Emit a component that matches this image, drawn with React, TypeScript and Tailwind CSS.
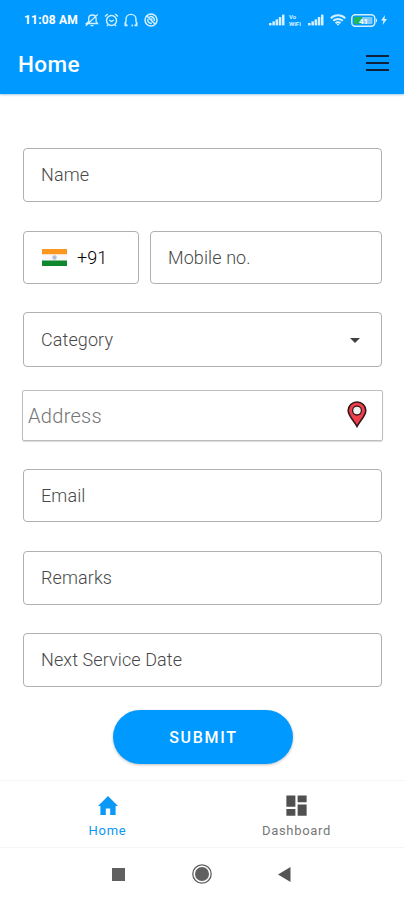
import React from "react";
import { MdArrowDropDown, MdDashboard } from "react-icons/md";

type FieldProps = {
  label: string;
  className?: string;
  children?: React.ReactNode;
};

const SignalIcon = () => (
  <svg width="16" height="12" viewBox="0 0 16 12" fill="#d5f0ff">
    <rect x="0" y="9" width="2.6" height="2.4" />
    <rect x="3.4" y="7.4" width="2.5" height="4" />
    <rect x="6.6" y="5.4" width="2.5" height="6" />
    <rect x="9.8" y="3" width="2.5" height="8.4" />
    <rect x="13" y="0.6" width="2.5" height="10.8" />
  </svg>
);

const HomeIcon = () => (
  <svg width="20" height="19" viewBox="0 0 20 19" fill="currentColor">
    <path d="M10 0L0 10h2.400v9h5.400v-6.500h4.400V19h5.400v-9H20z" />
  </svg>
);

const StatusBar = () => (
  <div className="flex h-10 items-center text-[#d5f0ff]">
    <span className="ml-6 w-[56px] text-[12px] font-bold tracking-[0.2px] whitespace-nowrap text-white">
      11:08 AM
    </span>
    <svg className="ml-[5px]" width="14" height="14" viewBox="0 0 14 14" fill="none" stroke="currentColor" strokeWidth="1.3">
      <path d="M1.500 10.500h11l-1.400-2V5.600C11 3.300 9.300 2 7.300 2S3.700 3.300 3.700 5.600v2.900zM5.500 12.600h3M0.800 12.800L12.800 1.400" />
    </svg>
    <svg className="ml-[5px]" width="15" height="14" viewBox="0 0 15 14" fill="none" stroke="currentColor" strokeWidth="1.400">
      <circle cx="7.500" cy="7.500" r="5" />
      <path d="M1 3.500L3.800 1M14 3.500L11.200 1M5.300 7l2.200 1.500L9.800 7M4 11.800L3 13M11 11.800l1 1.200" />
    </svg>
    <svg className="ml-[5px]" width="14" height="14" viewBox="0 0 14 14" fill="none" stroke="currentColor" strokeWidth="1.400">
      <path d="M2 9V6a5 4.600 0 0 1 10 0v3" />
      <path d="M1.400 9v3.400h2.200M12.600 9v3.400h-2.200M7.500 12.500h1.400" strokeWidth="1.800" />
    </svg>
    <svg className="ml-[6px]" width="14" height="14" viewBox="0 0 14 14" fill="none" stroke="currentColor" strokeWidth="1.500">
      <circle cx="7" cy="7" r="6" />
      <path d="M3 3l8 8M5.500 3.800c3-.8 5.300 1.300 4.800 4.200M3.800 6c-.5 2.500 1.300 4.500 4 4.200M6.500 6.200l2-.2" />
    </svg>

    <div className="mr-[17px] ml-auto flex items-center">
      <SignalIcon />
      <div className="ml-1 flex w-[15px] flex-col text-[6px] leading-[7px] font-bold">
        <span>Vo</span>
        <span>WiFi</span>
      </div>
      <span className="ml-[4px] flex">
        <SignalIcon />
      </span>
      <svg className="ml-[6px]" width="16" height="12" viewBox="0 0 16 12" fill="none" stroke="currentColor" strokeWidth="2">
        <path d="M0.800 4.200c4-3.800 10.400-3.800 14.400 0M3.200 6.800c2.700-2.500 6.900-2.500 9.600 0M5.600 9.200c1.300-1.200 3.500-1.200 4.800 0" />
        <path d="M6.500 10h3L8 11.800z" fill="currentColor" stroke="none" />
      </svg>
      <svg className="ml-[5px]" width="27" height="13" viewBox="0 0 27 13">
        <rect x="0.800" y="0.800" width="23" height="11.400" rx="3.500" fill="none" stroke="currentColor" strokeWidth="1.500" />
        <rect x="3" y="3" width="8" height="7" rx="1" fill="#20b85a" />
        <rect x="11" y="3" width="10.500" height="7" rx="1" fill="#7cc9fa" />
        <path d="M25 4.500c1.500.5 1.500 3.500 0 4z" fill="currentColor" />
        <text x="12.500" y="9.500" textAnchor="middle" fontSize="8" fontWeight="700" fill="#fff">41</text>
      </svg>
      <svg className="ml-[3px]" width="6" height="10" viewBox="0 0 6 10" fill="currentColor">
        <path d="M4 0L0 5.500h2.400L1.500 10 6 4H3.500z" />
      </svg>
    </div>
  </div>
);

const Field = ({ label, className = "", children }: FieldProps) => (
  <div
    className={`flex items-center rounded-[4px] border border-[#b0b0b0] pl-[17px] text-[18px] font-light tracking-[0.1px] text-[#484848] ${className}`}
  >
    <span className="pb-px">{label}</span>
    {children}
  </div>
);

const IndiaFlag = () => (
  <svg width="25" height="17" viewBox="0 0 25 17">
    <rect width="25" height="5.500" fill="#fb9620" />
    <rect y="5.500" width="25" height="6" fill="#f8f8fa" />
    <rect y="11.500" width="25" height="5.500" fill="#10882f" />
    <circle cx="12.500" cy="8.500" r="2.200" fill="#b5bddb" />
  </svg>
);

const LocationPin = () => (
  <svg className="-mt-[2px]" width="20" height="27" viewBox="0 0 20 27">
    <path
      d="M10 1C5 1 1.200 4.700 1.200 9.500 1.200 15 7 19.500 10 25.500 13 19.500 18.800 15 18.800 9.500 18.800 4.700 15 1 10 1z"
      fill="#ee3f4a"
      stroke="#32181c"
      strokeWidth="1.600"
    />
    <circle cx="10" cy="9.600" r="4.400" fill="#f2f2f2" stroke="#32181c" strokeWidth="1.300" />
  </svg>
);

export default function App() {
  return (
    <div className="flex h-[900px] w-[404px] flex-col overflow-hidden bg-white font-[Roboto,sans-serif]">
      <header className="h-[94px] shrink-0 bg-[#0099ff] shadow-[0_1px_2px_rgba(0,100,180,0.35)]">
        <StatusBar />
        <div className="flex h-[48px] items-center justify-between pr-[15px] pl-[18px]">
          <h1 className="pt-[2px] text-[22.5px] font-medium tracking-[0.4px] text-white">Home</h1>
          <button aria-label="Menu" className="mb-[2px] flex w-[23px] flex-col gap-[5px]">
            <span className="h-[2px] bg-[#102038]" />
            <span className="h-[2px] bg-[#102038]" />
            <span className="h-[2px] bg-[#102038]" />
          </button>
        </div>
      </header>

      <main className="flex h-[686px] shrink-0 flex-col pt-[54px] pr-[22px] pl-[23px]">
        <Field label="Name" className="h-[54px]" />

        <div className="mt-[29px] flex gap-[11px]">
          <div className="flex h-[53px] w-[116px] items-center rounded-[4px] border border-[#b0b0b0] pl-[18px] text-[18px]">
            <IndiaFlag />
            <span className="ml-[10px] pb-px font-light text-black">+91</span>
          </div>
          <Field label="Mobile no." className="h-[53px] flex-1" />
        </div>

        <Field label="Category" className="mt-[28px] h-[55px]">
          <MdArrowDropDown size={24} className="mr-[14px] ml-auto text-[#404040]" />
        </Field>

        <div className="-mx-px mt-[23px] flex h-[51px] items-center justify-between rounded-[2px] border border-[#bdbdbd] pr-[15px] pl-[5px] text-[20px] font-light tracking-[0.3px] text-[#757575] shadow-[0_1px_1px_rgba(0,0,0,0.15)]">
          <span>Address</span>
          <LocationPin />
        </div>

        <Field label="Email" className="mt-[28px] h-[53px]" />
        <Field label="Remarks" className="mt-[29px] h-[54px]" />
        <Field label="Next Service Date" className="mt-[28px] h-[54px]" />

        <button className="mt-[23px] ml-[90px] h-[54px] w-[180px] rounded-full bg-[#0099ff] pt-px pl-px text-[16px] font-medium tracking-[1.7px] text-white shadow-[0_1px_3px_rgba(0,0,0,0.25)]">
          SUBMIT
        </button>
      </main>

      <nav className="flex h-[67px] shrink-0 border-t border-[#f6f6f6] pl-[13px] text-[13px] tracking-[0.7px]">
        <div className="flex w-[189px] flex-col items-center pt-[15px] text-[#0c98f5]">
          <HomeIcon />
          <span className="mt-[6px] leading-[20px]">Home</span>
        </div>
        <div className="flex w-[189px] flex-col items-center pt-[13px] text-[#777777]">
          <MdDashboard size={27} className="-mt-[2px] text-[#505050]" />
          <span className="mt-[2px] leading-[20px]">Dashboard</span>
        </div>
      </nav>

      <footer className="flex h-[53px] items-center border-t border-[#f4f4f4] text-[#555555]">
        <span className="ml-[112px] size-[13px] bg-[#606060]" />
        <svg className="ml-[67px]" width="20" height="20" viewBox="0 0 20 20">
          <circle cx="10" cy="10" r="9.200" fill="none" stroke="#606060" strokeWidth="1.300" />
          <circle cx="10" cy="10" r="7" fill="#606060" />
        </svg>
        <svg className="ml-[66px]" width="13" height="15" viewBox="0 0 13 15">
          <path d="M0 7.500L12.500 0v15z" fill="#555555" />
        </svg>
      </footer>
    </div>
  );
}
